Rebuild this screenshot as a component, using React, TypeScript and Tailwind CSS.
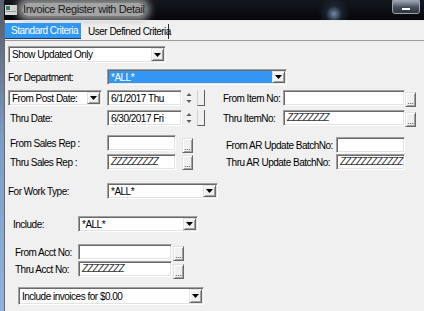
import React from 'react'

// classic 3D edges
const sunken =
  'border border-t-[#a0a0a0] border-l-[#a0a0a0] border-b-white border-r-white shadow-[inset_1px_1px_0_#696969,inset_-1px_-1px_0_#e3e3e3]'
const raised =
  'border border-t-[#e3e3e3] border-l-[#e3e3e3] border-b-[#696969] border-r-[#696969] shadow-[inset_1px_1px_0_#ffffff,inset_-1px_-1px_0_#a0a0a0] bg-[#f0f0f0]'

const DownArrow = () => (
  <svg width="7" height="4" viewBox="0 0 7 4">
    <path d="M0 0h7L3.5 4z" fill="#000" />
  </svg>
)

const Combo = ({
  text,
  w,
  h = 'h-[16px]',
  selected = false,
}: {
  text: string
  w: string
  h?: string
  selected?: boolean
}) => (
  <div className={`${w} ${h} ${sunken} bg-white flex p-[1px] shrink-0`}>
    <div
      className={`flex-1 flex items-center pl-[2px] whitespace-nowrap overflow-hidden ${
        selected ? 'bg-[#3296f5] text-white' : 'text-black'
      }`}
    >
      {text}
    </div>
    <div className={`w-[13px] ${raised} flex items-center justify-center`}>
      <DownArrow />
    </div>
  </div>
)

const Input = ({ w, hatch = 0 }: { w: string; hatch?: number }) => (
  <div className={`${w} h-[16px] ${sunken} bg-white flex items-center pl-[3px] shrink-0 overflow-hidden`}>
    {hatch > 0 && (
      <span className="italic text-[10px] leading-none tracking-[-0.9px] text-[#333] whitespace-nowrap">
        {'Z'.repeat(hatch)}
      </span>
    )}
  </div>
)

const Ellipsis = ({ mt = 'mt-[2px]' }: { mt?: string }) => (
  <div
    className={`w-[11px] h-[15px] ${mt} ${raised} flex items-end justify-center text-[8px] leading-[9px] tracking-normal shrink-0`}
  >
    ...
  </div>
)

const Spinner = () => (
  <div className="flex items-center ml-[3px] mr-[4px] shrink-0">
    <svg width="8" height="16" viewBox="0 0 8 16">
      <path d="M1.5 6L4 3l2.5 3z" fill="#5a5a5a" />
      <path d="M1.5 10L4 13l2.5-3z" fill="#5a5a5a" />
    </svg>
  </div>
)

const StubButton = () => (
  <div className="w-[8px] h-[16px] border-l border-l-[#cfcfcf] border-r border-r-[#5f5f5f] border-b border-b-[#5f5f5f] shrink-0" />
)

export default function App() {
  return (
    <div className="w-[424px] h-[311px] overflow-hidden flex flex-col bg-[#f0f0f0] text-[10px] leading-[13px] tracking-[-0.5px] text-black [font-family:'Liberation_Sans',Arial,sans-serif]">
      {/* title bar */}
      <div className="h-[20px] shrink-0 flex items-start bg-[radial-gradient(circle_at_334px_14px,rgba(150,180,220,0.75),rgba(60,80,110,0.3)_8px,transparent_16px),linear-gradient(to_bottom,#14171d,#05070a)]">
        <div className="w-[4px] h-full bg-[#5b6270]" />
        <svg width="12" height="10" viewBox="0 0 12 10" className="mt-[5px] ml-[1px] shrink-0">
          <rect x="0" y="0" width="12" height="10" fill="#d6d9d6" />
          <rect x="1" y="1" width="4" height="4" fill="#3d7a6a" />
          <rect x="1" y="6" width="10" height="1" fill="#8c948f" />
        </svg>
        <span className="ml-[5px] mt-[3px] h-[13px] px-[1px] flex items-center whitespace-nowrap text-[11px] tracking-[-0.4px] text-[#1a1a1a] rounded-[6px] bg-[rgba(190,190,190,0.85)] shadow-[0_0_7px_5px_rgba(180,180,180,0.75)]">
          Invoice Register with Detail
        </span>
        <div className="ml-auto mr-[4px] w-[28px] h-[14px] rounded-bl-[3px] rounded-br-[3px] border border-[#9aa3b0] bg-[linear-gradient(to_bottom,#9aa2ae,#4a5260_50%,#2e3440)] flex items-center justify-center">
          <div className="w-[8px] h-[2px] bg-white mt-[3px] shadow-[0_0_1px_#000]" />
        </div>
      </div>

      <div className="flex flex-1 min-h-0">
        {/* left window frame */}
        <div className="w-[4px] shrink-0 bg-[linear-gradient(to_bottom,#5b6270,#7d9cc4_40%,#8fb2dc)]" />

        <div className="flex-1 flex flex-col border-l border-l-[#6a6a6a] border-t border-t-[#e9e9e9] whitespace-nowrap">
          {/* tabs */}
          <div className="h-[20px] shrink-0 flex items-start border-b border-b-[#9c9c9c]">
            <div className="mt-[2px] h-[16px] w-[76px] bg-[#3296f5] border-b border-b-[#1c3c64] text-white flex items-center pl-[6px]">
              Standard Criteria
            </div>
            <div className="mt-[3px] h-[15px] ml-[2px] w-[86px] border-r border-r-[#2a2a2a] flex items-center pl-[5px]">
              User Defined Criteria
            </div>
          </div>

          {/* panel */}
          <div className="flex flex-col">
            <div className="mt-[5px] ml-[3px] h-[17px]">
              <Combo text="Show Updated Only" w="w-[158px]" h="h-[17px]" />
            </div>

            <div className="mt-[6px] ml-[3px] h-[16px] flex items-center">
              <span className="w-[99px]">For Department:</span>
              <Combo text="*ALL*" w="w-[180px]" selected />
            </div>

            <div className="mt-[5px] ml-[3px] h-[16px] flex items-start">
              <Combo text="From Post Date:" w="w-[94px]" />
              <div className="ml-[5px]">
                <div className={`w-[75px] h-[16px] ${sunken} bg-white flex items-center pl-[3px]`}>6/1/2017 Thu</div>
              </div>
              <Spinner />
              <StubButton />
              <span className="ml-[18px] w-[60px] self-center">From Item No:</span>
              <Input w="w-[122px]" />
              <Ellipsis />
            </div>

            <div className="mt-[4px] ml-[5px] h-[16px] flex items-start">
              <span className="w-[97px] self-center">Thru Date:</span>
              <div className={`w-[75px] h-[16px] ${sunken} bg-white flex items-center pl-[3px]`}>6/30/2017 Fri</div>
              <Spinner />
              <StubButton />
              <span className="ml-[18px] w-[60px] self-center">Thru ItemNo:</span>
              <Input w="w-[122px]" hatch={8} />
              <Ellipsis />
            </div>

            <div className="mt-[9px] ml-[5px] h-[16px] flex items-start">
              <span className="w-[97px] self-center">From Sales Rep :</span>
              <Input w="w-[69px]" />
              <div className="ml-[6px]">
                <Ellipsis mt="mt-[3px]" />
              </div>
              <span className="ml-[33px] w-[110px] mt-[4px]">From AR Update BatchNo:</span>
              <div className="mt-[2px]">
                <Input w="w-[69px]" />
              </div>
            </div>

            <div className="mt-[3px] ml-[5px] h-[16px] flex items-start">
              <span className="w-[97px] self-center">Thru Sales Rep :</span>
              <Input w="w-[69px]" hatch={9} />
              <div className="ml-[6px]">
                <Ellipsis mt="mt-[1px]" />
              </div>
              <span className="ml-[33px] w-[110px] self-center">Thru AR Update BatchNo:</span>
              <Input w="w-[69px]" hatch={12} />
            </div>

            <div className="mt-[13px] ml-[3px] h-[16px] flex items-center">
              <span className="w-[99px]">For Work Type:</span>
              <Combo text="*ALL*" w="w-[111px]" />
            </div>

            <div className="mt-[17px] ml-[8px] h-[16px] flex items-center">
              <span className="w-[65px]">Include:</span>
              <Combo text="*ALL*" w="w-[120px]" />
            </div>

            <div className="mt-[12px] ml-[10px] h-[16px] flex items-start">
              <span className="w-[63px] self-center">From Acct No:</span>
              <Input w="w-[94px]" />
              <div className="ml-[1px]">
                <Ellipsis />
              </div>
            </div>

            <div className="mt-[1px] ml-[10px] h-[16px] flex items-start">
              <span className="w-[63px] self-center">Thru Acct No:</span>
              <Input w="w-[94px]" hatch={8} />
              <div className="ml-[1px]">
                <Ellipsis mt="mt-[3px]" />
              </div>
            </div>

            <div className="mt-[10px] ml-[13px] h-[18px]">
              <Combo text="Include invoices for $0.00" w="w-[186px]" h="h-[18px]" />
            </div>
          </div>
        </div>
      </div>
    </div>
  )
}
